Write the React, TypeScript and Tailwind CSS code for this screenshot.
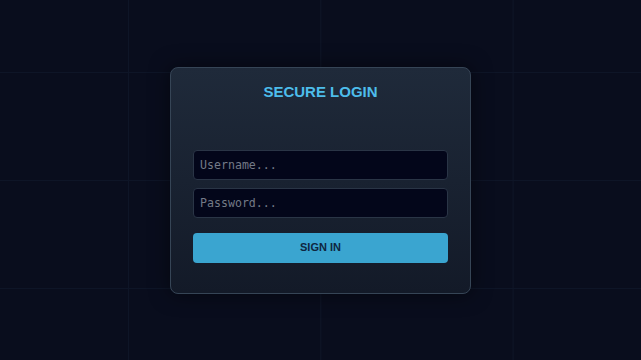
import React from "react";

export default function App() {
  return (
    <div className="w-[641px] h-[360px] flex items-center justify-center bg-[#090d1d] bg-[linear-gradient(to_right,#0e1527_1px,transparent_1px),linear-gradient(to_bottom,#0e1527_1px,transparent_1px)] bg-[size:192.3px_108px] bg-[position:128px_72px] font-['Liberation_Sans',Arial,sans-serif]">
      <div className="w-[301px] h-[227px] rounded-[8px] border border-[#364556] bg-[linear-gradient(to_bottom,#1f2a3a,#131a28)] px-[22px] pt-[15px] flex flex-col shadow-[0_0_20px_rgba(0,0,0,0.5)]">
        <h1 className="text-center text-[15px] leading-[18px] font-bold text-[#4dbdeb]">SECURE LOGIN</h1>
        <div className="mt-[49px] flex flex-col gap-[8px]">
          <input
            type="text"
            placeholder="Username..."
            className="h-[30px] w-full rounded-[4px] border border-[#2a3546] bg-[#03061a] px-[6px] text-[11.6px] font-['DejaVu_Sans_Mono',monospace] text-[#9ca3af] placeholder:text-[#737a87] outline-none"
          />
          <input
            type="password"
            placeholder="Password..."
            className="h-[30px] w-full rounded-[4px] border border-[#2a3546] bg-[#03061a] px-[6px] text-[11.6px] font-['DejaVu_Sans_Mono',monospace] text-[#9ca3af] placeholder:text-[#737a87] outline-none"
          />
        </div>
        <button className="mt-[15px] h-[30px] w-full rounded-[4px] bg-[#3aa5d0] text-[11px] font-bold text-[#0f2640]">
          SIGN IN
        </button>
      </div>
    </div>
  );
}
